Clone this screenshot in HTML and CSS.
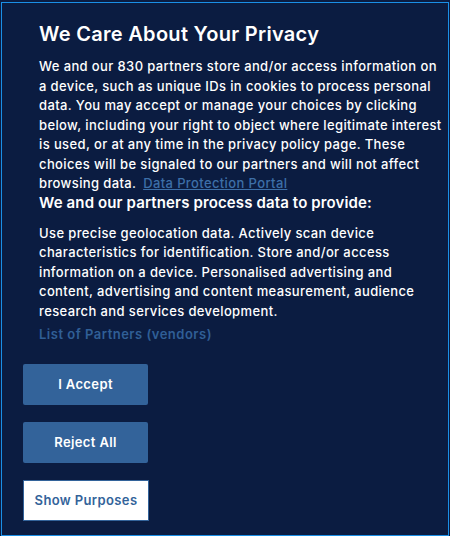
FILE: index.html
```html
<!DOCTYPE html>
<html lang="en">
<head>
<meta charset="utf-8">
<title>Privacy</title>
<link rel="stylesheet" href="styles.css">
</head>
<body>
<div class="dialog">
  <h2 class="title">We Care About Your Privacy</h2>
  <p class="text">We and our 830 partners store and/or access information on a device, such as unique IDs in cookies to process personal data. You may accept or manage your choices by clicking below, including your right to object where legitimate interest is used, or at any time in the privacy policy page. These choices will be signaled to our partners and will not affect browsing data. <a class="link" href="#">Data Protection Portal</a></p>
  <h3 class="subtitle">We and our partners process data to provide:</h3>
  <p class="text purposes">Use precise geolocation data. Actively scan device characteristics for identification. Store and/or access information on a device. Personalised advertising and content, advertising and content measurement, audience research and services development.</p>
  <a class="vendors" href="#">List of Partners (vendors)</a>
  <div class="buttons">
    <button class="btn primary">I Accept</button>
    <button class="btn primary">Reject All</button>
    <button class="btn secondary">Show Purposes</button>
  </div>
</div>
</body>
</html>
```
FILE: styles.css
```css
html, body {
  margin: 0;
  padding: 0;
  background: #0b1c41;
}
body {
  height: 536px;
  padding: 2px 1px 0 1px;
  box-sizing: border-box;
}
.dialog {
  box-sizing: border-box;
  height: 534px;
  border: 1px solid #1a8fe6;
  background: #0b1c41;
  padding: 18px 4px 0 37px;
  color: #ffffff;
  font-family: Inter, "Open Sans", sans-serif;
}
.title {
  margin: 0;
  font-size: 20px;
  font-weight: 600;
  line-height: 26px;
  letter-spacing: 0.3px;
}
.text {
  margin: 10px 0 0 0;
  font-size: 13px;
  font-weight: 500;
  line-height: 19.5px;
  letter-spacing: 0.38px;
}
.link {
  color: #3d6fa8;
  margin-left: 3px;
}
.subtitle {
  margin: 0;
  font-size: 15px;
  font-weight: 600;
  line-height: 17px;
  letter-spacing: 0.13px;
}
.purposes {
  margin-top: 13px;
}
.vendors {
  display: block;
  margin-top: 2.5px;
  color: #305f96;
  font-size: 13px;
  font-weight: 600;
  line-height: 20px;
  letter-spacing: 0.5px;
  text-decoration: none;
}
.buttons {
  display: flex;
  flex-direction: column;
  align-items: flex-start;
  gap: 17px;
  margin: 20px 0 0 -16px;
}
.btn {
  width: 125px;
  height: 41px;
  border-radius: 2px;
  font-family: Inter, "Open Sans", sans-serif;
  font-size: 13px;
  font-weight: 600;
  letter-spacing: 0.38px;
  cursor: pointer;
}
.primary {
  background: #33639a;
  border: none;
  color: #ffffff;
}
.secondary {
  width: 126px;
  background: #ffffff;
  border: 1px solid #33639a;
  border-radius: 0;
  color: #33639a;
}
```
